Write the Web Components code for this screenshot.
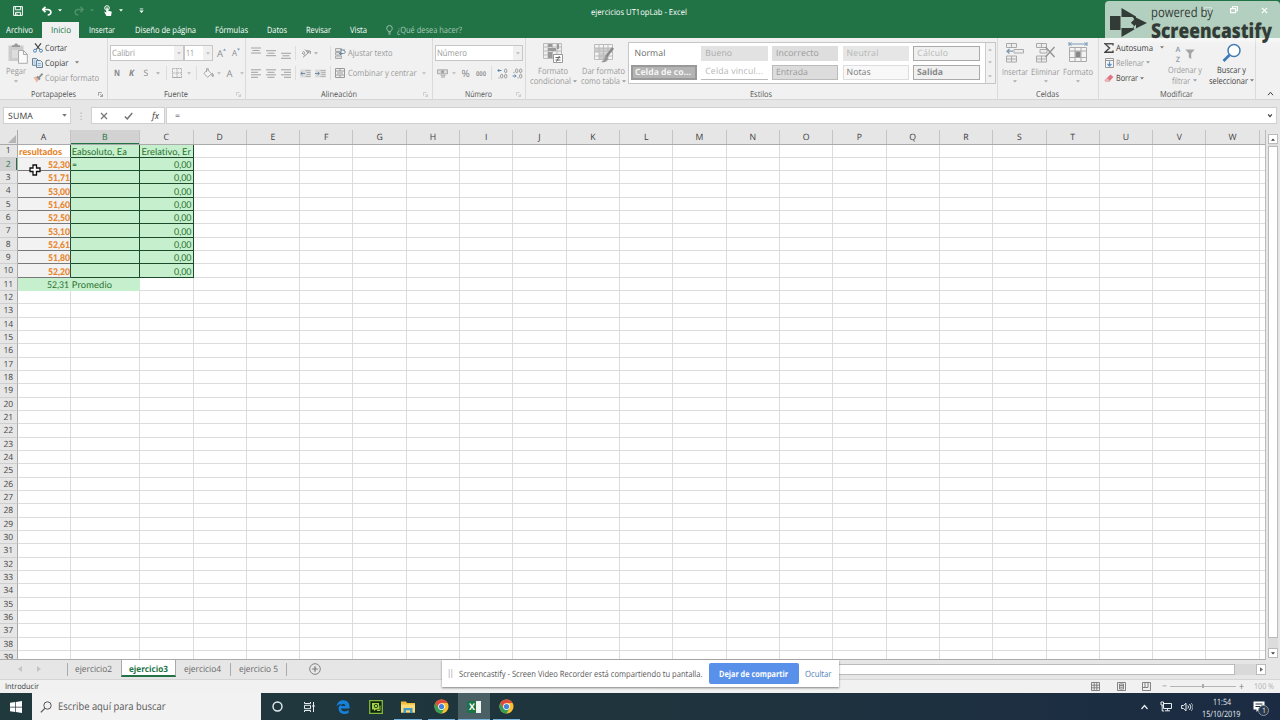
<!DOCTYPE html>
<html lang="es"><head><meta charset="utf-8"><title>ejercicios UT1opLab - Excel</title>
<style>html,body{margin:0;width:1280px;height:720px;overflow:hidden;background:#e6e6e6;font-family:"Open Sans","Noto Sans",sans-serif;font-size:8.7px;color:#3c3c3c;text-rendering:geometricPrecision}</style></head>
<body><excel-app></excel-app>
<script>
/* Single line of text fitted to a given width */
customElements.define('x-text', class extends HTMLElement {
  connectedCallback() {
    if (this.shadowRoot) return;
    const a = n => this.getAttribute(n);
    const w = parseFloat(a('w'));
    this.attachShadow({mode:'open'}).innerHTML = `<style>:host{display:block;flex:none;white-space:nowrap;line-height:1.36;${w?`width:${w}px;`:''}margin-left:${a('ml')||0}px;${a('s')?`font-size:${a('s')}px;`:''}${a('c')?`color:${a('c')};`:''}${a('b')?`font-weight:${a('b')};`:''}}span{display:inline-block;vertical-align:top;transform-origin:0 50%}</style><span><slot></slot></span>`;
    const s = this.shadowRoot.querySelector('span'), n = this.textContent.length;
    if (!w) return;
    const nat = s.getBoundingClientRect().width;
    if (nat <= w) s.style.letterSpacing = ((w - nat) / n).toFixed(3) + 'px';
    s.style.transform = `translateY(.7px) scaleX(${Math.min(1, w / nat).toFixed(4)})`;
  }
});
const chrome = `<circle cx="8" cy="8" r="7.5" fill="#fbc02d"/><path d="M8 8 1.5 4.3A7.5 7.5 0 0 1 14.5 4.3H8z" fill="#df4a3c"/><path d="M1.5 4.3A7.5 7.5 0 0 0 8 15.5L11.2 9.8 8 8 4.8 9.8z" fill="#35a055"/><path d="M1.5 4.3 4.9 10 8 8V4.3z" fill="#df4a3c"/><circle cx="8" cy="8" r="3.6" fill="#fff"/><circle cx="8" cy="8" r="2.8" fill="#4285d8"/>`;
const lines = (y, ws) => ws.map((w,i)=>`<path d="M${w[0]} ${y+i*2.5}h${w[1]}" stroke="currentColor" stroke-width=".9"/>`).join('');
const ICONS = {
  save:['0 0 10 10','<path d="M.6.6h8.8v8.8H.6zM2.3.6v3.2h5.4V.6M2.6 9.4V6.3h4.8v3.1M4 7.5v1.9"/>'],
  undo:['0 0 10 10','<path d="M3.5.8.8 3.5l2.7 2.6M1 3.5h4.5C10 3.5 10 9 5.7 9" stroke-width="1.7"/>'],
  redo:['0 0 10 10','<path d="M6.5.8 9.2 3.5 6.5 6.1M9 3.5H4.5C0 3.5 0 9 4.3 9" stroke-width="1.5"/>'],
  touch:['0 0 10 12','<circle cx="4" cy="3" r="2.3"/><path d="M3.3 2.5v5L1 6.5 3.5 11H8l.8-4.2-4-1.2V2.5z" fill="currentColor" stroke="none"/>'],
  car:['0 0 6 4','<path d="M0 0h6L3 3.6z" fill="currentColor" stroke="none"/>'],
  qat:['0 0 6 6','<path d="M1 .5h4"/><path d="M.4 2.5h5.2L3 5.4z" fill="currentColor" stroke="none"/>'],
  bulb:['0 0 8 11','<path d="M2.7 7.4C2.7 5.9.8 5.4.8 3.6a3.2 3.2 0 0 1 6.4 0c0 1.8-1.9 2.3-1.9 3.8zM2.7 8.8h2.6M3 10.2h2"/>'],
  paste:['0 0 20 21','<path d="M.5 2.5h15V18H.5z" fill="#ccc" stroke="none"/><path d="M4 4V2.2h2.2C6.2-.2 10-.2 10 2.2h2V4z" fill="#999" stroke="none"/><path d="M4 7h7v8H4z" fill="#ddd" stroke="none"/><path d="M10.5 7.5h5l3.8 3.8v9h-8.8zM15.5 7.5v4h3.8" fill="#fafafa" stroke="#aaa"/>'],
  cut:['0 0 10 10','<path d="M2 .3 6.8 6.5M8 .3 3.2 6.5" stroke="#454545" stroke-width="1.2"/><circle cx="2" cy="7.7" r="1.5" stroke="#5286b8"/><circle cx="8" cy="7.7" r="1.5" stroke="#5286b8"/>'],
  copy:['0 0 11 11','<path d="M.5 1.5h4l1.8 1.8v5H.5z" fill="#dce6f0" stroke="#6e8297"/><path d="M4.5 3.5h4l2 2v5h-6z" fill="#dce9f5" stroke="#6e8297"/><path d="M5.8 6.5h3M5.8 8.4h3M1.8 4h1.5M1.8 6h1.5" stroke="#6c9cc7" stroke-width=".7"/>'],
  brush:['0 0 10 10','<path d="M.3 4.3 3.8 9.5 6.5 6 4 3.5z" fill="#e6b9a4" stroke="none"/><path d="m4 3.5 3 3M6 4.5 9.5.6" stroke="#8e8e8e" stroke-width="1.8"/>'],
  launch:['0 0 6 6','<path d="M.5 4.5v-4h4M2.5 2.5l2.7 2.7M5.4 2.5v3h-3" stroke-width=".8"/>'],
  up:['0 0 4 3','<path d="M0 3h4L2 0z" fill="#7d9dbb" stroke="none"/>'], dn:['0 0 4 3','<path d="M0 0h4L2 3z" fill="#7d9dbb" stroke="none"/>'],
  border:['0 0 10 10','<path d="M.5.5h9v9h-9zM5 .5v9M.5 5h9" stroke-dasharray="1.2 .6"/><path d="M.5 9.5h9"/>'],
  fill:['0 0 11 10','<path d="m4.5 1.8 4 4-4 3.5-3.6-4zM3.5 4V.6h1.8V3" fill="#f4f4f4"/><path d="M9.2 5c1.8 2.2 1.6 3.5.6 3.5S8.5 7.300 9.2 5" fill="currentColor"/>'],
  at:['0 0 10 8',lines(1,[[0,10],[1.5,7],[0,10]])], am:['0 0 10 8',lines(1.7,[[0,10],[1.5,7],[0,10]])], ab:['0 0 10 8',lines(2.3,[[0,10],[1.5,7],[0,10]])],
  al:['0 0 10 9',lines(.8,[[0,10],[0,7],[0,10],[0,7]])], ac:['0 0 10 9',lines(.8,[[0,10],[1.5,7],[0,10],[1.5,7]])], ar:['0 0 10 9',lines(.8,[[0,10],[3,7],[0,10],[3,7]])],
  orient:['0 0 10 10','<path d="m2 9.300 7-6M9.300 6V3H6.500"/><path d="m1 5 3 2.500M1.500 4.500C2.500 2 4.500 5 3 6M4 1.500l3 3.500M5 3c2-1.500 3 .5 1.800 1.800"/>'],
  ind:['0 0 11 9','<path d="M0 .5h11v8H0z" fill="#ddd" stroke="none"/><path d="M5.500 1.500h5M6.500 3.500h4M6.500 5.500h4M5.500 7.500h5" stroke="#aaa" stroke-width=".8"/><path d="M5 4.500H1M2.500 2.800.8 4.500l1.700 1.700" stroke="#6c8ba8"/>'],
  ind2:['0 0 11 9','<path d="M0 .5h11v8H0z" fill="#ddd" stroke="none"/><path d="M5.500 1.500h5M6.500 3.500h4M6.500 5.500h4M5.500 7.500h5" stroke="#aaa" stroke-width=".8"/><path d="M0 4.500h4M2.700 2.800l1.700 1.700-1.700 1.700" stroke="#6c8ba8"/>'],
  wrap:['0 0 11 11','<path d="M.5.5h6v3h-6zM.5 4.500h6v2.500h-6zM.5 8h6v2.500h-6z" fill="#e2e2e2" stroke="#aaa"/><path d="M5 2h5M4 5.500h4.500c2.500 0 2-3 0-3M6 4.200 4.500 5.500 6 7" stroke="#6889a5"/>'],
  merge:['0 0 10 10','<path d="M.5.5h9v9h-9zM.5 3h9M.5 7h9M5 .5V3M5 7v2.500"/><path d="M2 5h6"/>'],
  money:['0 0 11 9','<path d="M.5.8h10v4H.5z" fill="#ddd"/><circle cx="5.500" cy="2.800" r="1.300" fill="#999"/><path d="M3.500 6.200h5M4 8h4" stroke-width="1.400" stroke="#bbb"/>'],
  cond:['0 0 20 21','<path d="M.5.5h18v15H.5z" fill="#eee" stroke="#bbb"/><path d="M5 .5v15M9.500.5v15M14 .5v15M.5 4h18M.5 8h18M.5 12h18" stroke="#bbb"/><path d="M5 1h4v3H5zM5 5h8v3H5zM5 9h4v6H5zM14 1h2v5h-2z" fill="#9a9a9a" stroke="none"/><path d="M10.500 11.500h9v8h-9z" fill="#fff" stroke="#999"/><path d="M12.500 14.500h5M12.500 17h5M16.500 13l-3 5.500" stroke="#666"/>'],
  tbl:['0 0 20 21','<path d="M.5 1.500h18v15H.5z" fill="#f5f5f5" stroke="#bbb"/><path d="M.5 5h18v4H.5zM5 10h9v6H5z" fill="#ccc" stroke="none"/><path d="M5 1.500v15M9.500 1.500v15M14 1.500v15M.5 5h18M.5 9h18M.5 13h18" stroke="#bbb"/><path d="M19 5 12 14" stroke="#888" stroke-width="2.500"/><path d="M12 13c-2 1-1 4-5 6 3 1 7 0 7-4z" fill="#999" stroke="none"/>'],
  ins:['0 0 18 20','<path d="M.5.5h10v4H.5zM5.500.5v4M.5 13h10v6H.5zM.5 16h10M5.500 13v6M8 6.500h9.500v3.500H8z" fill="#eee" stroke="#aaa"/><path d="M7 8.200H1M3.500 6 1 8.200l2.500 2.300" stroke="#7c97b0" stroke-width="1.300"/>'],
  del:['0 0 20 20','<path d="M.5.5h10v4H.5zM5.500.5v4M.5 13h10v6H.5zM.5 16h10M5.500 13v6M4 6.500h7v3.500H4z" fill="#eee" stroke="#aaa"/><path d="m9.500 4 9 10M18.500 4l-9 10" stroke="#949494" stroke-width="1.400"/>'],
  fmt:['0 0 20 21','<path d="M1 0v4M19 0v4M1 2h18M3.500.5 1.500 2l2 1.500M16.500.5l2 1.500-2 1.500" stroke="#7a9ab8"/><path d="M1.500 5.500h17v14h-17zM7 5.500v14M13 5.500v14M1.500 9h17M1.500 15.500h17" fill="#f4f4f4" stroke="#aaa"/><path d="M7.500 9.500h5v5.500h-5z" fill="#888" stroke="none"/>'],
  sum:['0 0 10 10','<path d="M9 2.500V.8H1L5.500 5 1 9.200h8V7.500" stroke="#444" stroke-width="1.400"/>'],
  rell:['0 0 9 10','<path d="M.5.5h8v9h-8zM.5 2.500h8" fill="#f5f5f5" stroke="#999"/><path d="M4.500 3.500V8M2.500 6l2 2.200 2-2.200" stroke="#5b8fc4" stroke-width="1.200"/>'],
  erase:['0 0 10 9','<path d="M6.500.5 9.300 3 5 8H2L.5 6.200z" fill="#de7484" stroke="none"/><path d="m2.800 3.800 3 3L5 8H2L.5 6.200z" fill="#eab5bc" stroke="none"/>'],
  sort:['0 0 10 11','<path d="M.3.5h9.400L6.200 4.500V10L3.800 8.500v-4z" fill="#a5a5a5" stroke="none"/>'],
  find:['0 0 19 19','<circle cx="12" cy="7" r="6" fill="#fff" stroke="#3e79b4" stroke-width="1.500"/><path d="M7.500 11.500 1.500 17.500" stroke="#3e79b4" stroke-width="2.600"/>'],
  caretup:['0 0 8 6','<path d="m1 5 3-3.500L7 5" stroke-width="1.200"/>'], caretdn:['0 0 8 6','<path d="m1.500 1.500 2.500 3 2.500-3" stroke-width="1.600"/>'],
  x:['0 0 8 8','<path d="m1 1 6 6M7 1 1 7" stroke-width="1.300"/>'], ok:['0 0 9 8','<path d="m.8 4.500 2.500 2.300L8.300 1" stroke-width="1.500"/>'],
  restore:['0 0 8 8','<path d="M.6 2.600h5v4h-5zM2.500 2.500V.7h5v4H5.700" stroke-width="1.100"/>'],
  min:['0 0 9 8','<path d="M.5.500h8v6h-8z"/>'],
  plus:['0 0 12 12','<circle cx="6" cy="6" r="5.300" stroke-width=".9"/><path d="M6 3.200v5.600M3.200 6h5.600" stroke-width="1.200"/>'],
  left:['0 0 4 6','<path d="M4 0v6L0 3z" fill="currentColor" stroke="none"/>'], right:['0 0 4 6','<path d="M0 0v6l4-3z" fill="currentColor" stroke="none"/>'],
  v1:['0 0 9 9','<path d="M.5.5h8v8h-8zM3.200.5v8M5.800.5v8M.5 3.200h8M.5 5.800h8" stroke-width=".9"/>'], v2:['0 0 9 9','<path d="M.5.5h8v8h-8zM2.500 2v5h4V2zM3 3.500h3M3 5.200h3" stroke-width=".9"/>'], v3:['0 0 9 9','<path d="M.5.5h8v8h-8zM.5 5.500h5.500v-5M3 .5v5" stroke-width=".9"/>'],
  win:['0 0 12 12','<path d="M0 1.700 5.300 1v4.700H0zM6 .9 12 0v5.700H6zM0 6.400h5.300V11L0 10.300zM6 6.400h6V12l-6-.9z" fill="#fff" stroke="none"/>'],
  search:['0 0 12 12','<circle cx="7.500" cy="4.500" r="3.700"/><path d="M4.800 7.300.8 11.300" stroke-width="1.200"/>'],
  ring:['0 0 11 11','<circle cx="5.500" cy="5.500" r="4.500" stroke-width="1.400"/>'],
  task:['0 0 11 10','<path d="M.5 0v1.500h6V0M.5 3.300h6v3.400h-6zM.5 10V8.500h6V10M9.500 0v10"/><path d="M8.500 3h2v2h-2z" fill="currentColor" stroke="none"/>'],
  edge:['0 0 14 14','<path d="M.6 6.500C1.200 2 4 .3 7.300.3c4 0 6.200 3 6.200 6.200v2H5c.3 3.500 5 3.500 7.700 1.800v2.800c-5 2.300-10.200.5-10.200-4.500 0-2 1-3.500 2.800-4.200C3.500 4.200 2 4.600.6 6.500zM5 6h4.500C9.500 3.500 5.500 3 5 6z" fill="#1681db" stroke="none" fill-rule="evenodd"/>'],
  cam:['0 0 14 14','<path d="M.7.7h12.600v12.600H.7z" fill="#10240e" stroke="#82b93d" stroke-width="1.300"/><path d="M3 3h7v6.500H7L5 11V9.500H3z" fill="#a5cf45" stroke="none"/><circle cx="7" cy="6" r="1.700" stroke="#25491e"/><path d="M8 10.500h3V5.500" stroke="#a5cf45"/>'],
  folder:['0 0 14 12','<path d="M0 .5h5l1 1.500h8v9.500H0z" fill="#eebd3c" stroke="none"/><path d="M0 3.500h14v8H0z" fill="#fbdc76" stroke="none"/><path d="M2.500 12V7h9v5H9V9.300H5V12z" fill="#419bc8" stroke="none"/>'],
  chrome:['0 0 16 16','<g stroke="none">'+chrome+'</g>'],
  net:['0 0 12 11','<path d="M3.500 2.500h8v5h-8zM7.500 7.500v2M5 9.800h5M1 1v3h2.500V1zM2.200 4v6h2"/>'],
  vol:['0 0 12 10','<path d="M.6 3.500h2L5 1.200v7.600L2.600 6.500h-2zM6.800 3.500q1.500 1.500 0 3M8.500 2q3 3 0 6"/><path d="M10.200 1q3.500 4 0 8" opacity=".6"/>'],
  note:['0 0 12 12','<path d="M.5.5h11v8H6L3.500 11V8.500h-3z" fill="#fff" stroke="none"/><path d="M2.500 3h7M2.500 5.500h7" stroke="#1c2e42"/>'],
  cross:['0 0 12 12','<path d="M4 1h3.500v3H11v3.500H7.500V11H4V7.500H1V4h3z" fill="#fff" stroke="#111" stroke-width="1.300"/>'],
  cast:['0 0 37 29','<path d="M0 8h10.500v14H0zM11.500 0l14.500 8.500v4l-3.500-3.500h-11zM11.500 29l14.500-8.500v-4l-3.500 3.500h-11zM23.800 8.500 37 15 23.800 21.500v-4l-3-2.800 3-2.700z" fill="#333b37" stroke="none"/>'],
  dec1:['0 0 11 11','<path d="M4.500 2.500H1M2.300 1 .8 2.500 2.300 4" stroke="#5f86aa"/><ellipse cx="8.700" cy="2.800" rx="1.200" ry="1.900"/><ellipse cx="4.700" cy="8.200" rx="1.200" ry="1.900"/><ellipse cx="8.700" cy="8.200" rx="1.200" ry="1.900"/><path d="M2 9.300v1.200"/>'],
  dec2:['0 0 11 11','<ellipse cx="4.700" cy="2.800" rx="1.200" ry="1.900"/><ellipse cx="8.700" cy="2.800" rx="1.200" ry="1.900"/><path d="M2 3.900v1.200M6 9.300v1.200"/><ellipse cx="8.700" cy="8.200" rx="1.200" ry="1.900"/><path d="M.5 8H4M2.700 6.500 4.200 8 2.700 9.500" stroke="#5f86aa"/>'],
  corner:['0 0 8 8','<path d="M8 0v8H0z" fill="#b5b5b5" stroke="none"/>'],
  grip:['0 0 5 9','<path d="M1.200 0v9M3.800 0v9" stroke="#c4c4c4"/>']
};
customElements.define('x-icon', class extends HTMLElement {
  connectedCallback() {
    if (this.shadowRoot) return;
    const a = n => this.getAttribute(n), [vb, body] = ICONS[a('n')], v = vb.split(' ');
    this.attachShadow({mode:'open'}).innerHTML = `<style>:host{display:block;flex:none;width:${a('w')||v[2]}px;height:${a('h')||v[3]}px;margin-left:${a('ml')||0}px;${a('c')?`color:${a('c')}`:''}}svg{display:block;width:100%;height:100%}</style><svg viewBox="${vb}" fill="none" stroke="currentColor">${body}</svg>`;
  }
});
const define = (name, css, html) => customElements.define(name, class extends HTMLElement {
  constructor() {
    super();
    const t = document.createElement('template');
    t.innerHTML = `<style>:host{display:block;box-sizing:border-box;flex:none}*{box-sizing:border-box}.r{display:flex;align-items:center;flex:none}.c{display:flex;flex-direction:column;flex:none;align-items:center}${css}</style>${html}`;
    this.attachShadow({mode:'open'}).append(t.content.cloneNode(true));
  }
});
const T = (s,w,ml=0,x='') => `<x-text w="${w}" ml="${ml}" ${x}>${s}</x-text>`;
const I = (n,ml=0,x='') => `<x-icon n="${n}" ml="${ml}" ${x}></x-icon>`;
const car = (ml,c='#777') => I('car',ml,`w="4" h="3" c="${c}"`);

define('title-bar', ':host{height:21px;display:flex;align-items:center;color:#fff;background:#217346}',
  I('save',13)+I('undo',19)+I('car',6,'w="4" h="3"')+I('redo',12,'c="#4d9069"')+I('car',6,'w="4" h="3" c="#4d9069"')+I('touch',9)+I('car',6,'w="4" h="3"')+I('qat',16,'w="5" h="6"')+`<div class="r" style="margin:2px 0 0 auto;width:689px">`+T('ejercicios UT1opLab - Excel',96,0,'s="8.300"')+'</div>');
define('tab-strip', ':host{height:17px;display:flex;align-items:center;color:#fff;background:#217346;padding-top:1px}.on{background:#f1f1f1;color:#217346;width:37px;height:17px;margin-left:9px}',
  T('Archivo',27,6)+`<div class="r on">${T('Inicio',20,8.500)}</div>`+T('Insertar',26,10)+T('Diseño de página',61,20)+T('Fórmulas',33,19)+T('Datos',20,19)+T('Revisar',25,19)+T('Vista',17,19)+I('bulb',19,'w="7" h="10" c="#a9cab7"')+T('¿Qué desea hacer?',65,4,'c="#a9cab7"'));
define('ribbon-group', ':host{height:61px;display:flex;flex-direction:column;border-right:1px solid #dadada;position:relative}.b{height:50.500px;flex:none}.l{display:flex;align-items:center;height:11px;justify-content:center;font-size:8.300px;color:#555}.k{position:absolute;right:4px;bottom:2px}',
  '<div class="b"><slot></slot></div><div class="l"><slot name="label"></slot></div><div class="k"><slot name="launch"></slot></div>');
const group = (w,label,lw,body,l) => `<ribbon-group style="width:${w}px">${body}<x-text slot="label" w="${lw}">${label}</x-text>${l?`<x-icon slot="launch" n="launch" w="5" h="5" c="${l}"></x-icon>`:''}</ribbon-group>`;
const sty = (s,w,c,bg,x='') => `<div class="st" style="color:${c};background:${bg};${x}">${T(s,w,/border:/.test(x)?(/2px/.test(x)?2:3):4)}</div>`;
const big = (ic,w,a,aw,b,bw,c) => `<div class="c" style="width:${w}px;color:${c}">${I(ic)}<div style="height:${b===null?2:0}px"></div>${T(a,aw,0,'style="margin-top:.5px"')}${b===null?`<div style="height:3px"></div>${car(0,'#aaa')}`:`<div class="r" style="height:10px">${T(b,bw)}${car(2,c)}</div>`}</div>`;
define('ribbon-bar', `:host{height:62px;display:flex;background:#f1f1f1;border-bottom:1px solid #d5d5d5}.g{color:#aaa}.box{background:#fff;border:1px solid #c6c6c6;height:16px;color:#999}.arr{width:9px;height:14px;background:#f0f0f0;margin-left:auto;display:flex;align-items:center;justify-content:center}.v{width:1px;height:14px;background:#ddd;flex:none}
.gal{width:368px;height:42px;border:1px solid #c6c6c6;background:#fff;display:flex;margin-top:4px}.sg{display:grid;grid-template-columns:repeat(5,66.500px);column-gap:4.200px;grid-template-rows:15px 15px;row-gap:3.500px;padding:3px 0 0 2px;width:351px;flex:none}.st{display:flex;align-items:center;overflow:hidden;height:15px}.st x-text{margin-top:-1px}.gb{width:10px;margin-left:5px;background:#f1f1f1;border-left:1px solid #ccc;display:flex;flex-direction:column;justify-content:space-around;align-items:center}`,
group(107.500,'Portapapeles',45,
 `<div class="r" style="align-items:flex-start"><div class="c" style="width:32px;padding-top:5px"><div style="padding-left:4px">${I('paste')}</div><div style="height:1px"></div>${T('Pegar',20,0,'c="#999"')}<div style="height:3px"></div>${car(0,'#aaa')}</div>
 <div style="padding-top:2px"><div class="r" style="height:15.300px">${I('cut',1)}${T('Cortar',22,2)}</div><div class="r" style="height:15.300px">${I('copy')}${T('Copiar',23.500,2)}${car(6)}</div><div class="r" style="height:15.300px">${I('brush',1)}${T('Copiar formato',54,2)}</div></div></div>`.replace('54" ml="2"','54" ml="2" c="#999"'),'#777')+
group(138,'Fuente',24,
 `<div class="r" style="padding-top:7px;margin-left:2.500px"><div class="box r" style="width:74px">${T('Calibri',23,1)}<div class="arr">${car(0,'#bbb')}</div></div><div class="box r" style="width:29px">${T('11',8,1)}<div class="arr">${car(0,'#bbb')}</div></div>${T('A',6,4,'s="9.500" c="#888"')}<div style="margin-top:-7px">${I('up',0,'w="3" h="3"')}</div>${T('A',5,5.500,'s="8.500" c="#888"')}<div style="margin-top:-7px">${I('dn',0,'w="3" h="3"')}</div></div>
 <div class="r g" style="margin-top:5px;height:14px">${T('N',6,6,'b="700" c="#888"')}${T('K',5,9,'b="700" c="#888" style="font-style:italic"')}${T('S',5,10,'c="#888" style="text-decoration:underline"')}${car(7,'#aaa')}<i class="v" style="margin-left:6px"></i>${I('border',5)}${car(5,'#bbb')}<i class="v" style="margin-left:5px"></i>${I('fill',6)}${car(3,'#bbb')}${T('A',7,6,'s="9.500" c="#888"')}${car(6,'#bbb')}</div>`,'#bbb')+
group(187.500,'Alineación',36,
 `<div class="r" style="padding-top:7px;height:23px;color:#999">${I('at',5,'style="margin-top:-5px"')}${I('am',5)}${I('ab',5,'style="margin-top:3px"')}<i class="v" style="margin-left:4px"></i>${I('orient',5)}${car(3,'#aaa')}<i class="v" style="margin-left:12px"></i>${I('wrap',4)}${T('Ajustar texto',44.500,2)}</div>
 <div class="r" style="margin-top:5px;height:14px;color:#999">${I('al',5)}${I('ac',5)}${I('ar',5)}<i class="v" style="margin-left:4px"></i>${I('ind',4)}${I('ind2',4)}<i class="v" style="margin-left:4px"></i>${I('merge',4.500)}${T('Combinar y centrar',68.500,3)}${car(5,'#bbb')}</div>`,'#bbb')+
group(92.500,'Número',27,
 `<div class="r" style="padding-top:7px;margin-left:2px"><div class="box r" style="width:88px">${T('Número',30,1)}<div class="arr">${car(0,'#bbb')}</div></div></div><div class="r g" style="margin-top:5px;height:14px">${I('money',4)}${car(4,'#bbb')}${T('%',9,5.500,'s="10" c="#888"')}${T('000',10,5,'s="6.500" b="700" c="#999"')}<i class="v" style="margin-left:5px"></i>${I('dec1',5,'c="#999"')}${I('dec2',4,'c="#999"')}</div>`,'#bbb')+
group(472.500,'Estilos',22,
 `<div class="r" style="align-items:flex-start"><div class="r" style="padding-top:5px;width:102px;align-items:flex-start">${big('cond',55,'Formato',30,'condicional',41,'#999')}${big('tbl',46,'Dar formato',43,'como tabla',39,'#999')}</div><div class="gal"><div class="sg">${
 sty('Normal',31,'#666','#fff')+sty('Bueno',27,'#aaa','#e2e2e2')+sty('Incorrecto',43,'#999','#dedede')+sty('Neutral',32,'#b5b5b5','#e6e6e6')+sty('Cálculo',31,'#b5b5b5','#f0f0f0','border:1px solid #aaa')+
 sty('Celda de co...',56,'#f4f4f4','#b4b4b4','border:2px double #999;font-weight:700')+sty('Celda vincul...',58,'#b5b5b5','#fff','border-bottom:1px solid #bbb')+sty('Entrada',32,'#999','#dcdcdc','border:1px solid #bbb')+sty('Notas',24,'#777','#f8f8f8','border:1px solid #ddd')+sty('Salida',26,'#888','#f0f0f0','border:1px solid #aaa;font-weight:700')}</div><div class="gb">${I('car',0,'w="4" h="3" c="#bbb" style="transform:rotate(180deg)"')}${car(0,'#bbb')}${car(0,'#bbb')}</div></div></div>`)+
group(100.500,'Celdas',23,`<div class="r" style="padding:5px 0 0 2px;align-items:flex-start">${big('ins',29,'Insertar',26,null,0,'#999')}${big('del',33,'Eliminar',28.500,null,0,'#999')}<div style="margin-top:-1px">${big('fmt',32,'Formato',30,null,0,'#999')}</div></div>`)+
group(157,'Modificar',33,`<div class="r" style="align-items:flex-start"><div style="padding:2px 0 0 5px;width:63px"><div class="r" style="height:15.300px">${I('sum')}${T('Autosuma',37,2)}${car(7)}</div><div class="r" style="height:15.300px;color:#999">${I('rell',1)}${T('Rellenar',28,2)}${car(2,'#999')}</div><div class="r" style="height:15.300px">${I('erase',.500)}${T('Borrar',22,2)}${car(2)}</div></div>
 <div class="c" style="width:46px;padding-top:6px;color:#999"><div class="r" style="height:20px"><div class="c" style="width:8px;color:#8b9db0">${T('A',6,0,'s="7.300" b="600" style="line-height:10px"')}${T('Z',5.500,0,'s="7.300" b="600" style="line-height:10px"')}</div>${I('sort',2)}</div>${T('Ordenar y',34)}<div class="r" style="height:10px">${T('filtrar',18)}${car(3,'#999')}</div></div><div class="c" style="width:47px;padding-top:5px">${I('find',0,'w="19" h="20"')}<div style="height:1px"></div>${T('Buscar y',29)}<div class="r" style="height:10px">${T('seleccionar',39)}${car(2)}</div></div></div>`)+
`<div style="margin:53px 0 0 11px">${I('caretup',0,'w="7" h="5"')}</div>`);
define('formula-bar', ':host{height:30px;display:flex;align-items:flex-start;padding:7px 0 0 3px;background:#e6e6e6}.f{height:17px;background:#fff;border:1px solid #d0d0d0}',
 `<div class="f r" style="width:68px">${T('SUMA',25,4)}${I('car',29,'w="5" h="3" c="#777"')}</div><div class="r" style="height:17px">${T('⋮',4,8,'s="9"')}</div><div class="f r" style="width:74px;margin-left:8px">${I('x',8,'c="#777"')}${I('ok',16,'c="#777"')}${T('fx',7,19,'s="9.500" style="font-style:italic;margin-left:19px"')}</div><div class="f r" style="width:1111px;margin-left:1px">${T('=',5,8)}${I('caretdn',1087,'w="6" h="5"')}</div>`);

/* Spreadsheet grid */
const cols = [...'ABCDEFGHIJKLMNOPQRSTUVW'], cw = c => c=='A'?53:c=='B'?69.700:53.320;
const vals = ['52,30','51,71','53,00','51,60','52,50','53,10','52,61','51,80','52,20'];
const cell = (r,c) => {
  if (r==1) return c=='A'?['h',T('resultados',43,1)]:c=='B'?['g',T('Eabsoluto, Ea',55,1.300)]:c=='C'?['g',T('Erelativo, Er',49.500,1.300)]:['',''];
  if (r<11) return c=='A'?['o',T(vals[r-2],22)]:c=='B'?['g'+(r==2?' act':''),r==2?T('=',5,1.300):'']:c=='C'?['g n',T('0,00',17.500)]:['',''];
  if (r==11) return c=='A'?['p n',T('52,31',22)]:c=='B'?['p',T('Promedio',40.500,1.300)]:['',''];
  return ['',''];
};
let grid = `<div class="row hd"><div class="rh">${I('corner',0)}</div>${cols.map(c=>`<div class="ch ${c=='B'?'sel':''}" style="width:${cw(c)}px">${c}</div>`).join('')}</div>`;
for (let r=1;r<40;r++) grid += `<div class="row"><div class="rh ${r==2?'sel':''}">${r}</div>${cols.map(c=>{const [k,t]=cell(r,c);return `<div class="d ${k}" style="width:${cw(c)}px">${t}</div>`}).join('')}<div class="d e"></div></div>`;
define('sheet-grid', `:host{height:530px;display:flex;background:#e6e6e6}.s{width:1266px;height:530px;overflow:hidden;border-right:1px solid #bbb;border-bottom:1px solid #aaa;flex:none}
.row{display:flex;height:13.335px;background:#fff}.hd{height:14.500px;background:#e6e6e6;border-bottom:1px solid #aaa}.rh{width:17.500px;flex:none;background:#e6e6e6;border-right:1px solid #aaa;border-bottom:1px solid #cfcfcf;display:flex;align-items:center;justify-content:center;font-size:8.500px;color:#444;line-height:12px;padding-top:1.500px}.hd .rh{justify-content:flex-end;align-items:flex-end;padding:0 1px 1px 0;border-bottom:0}.ch{flex:none;text-align:center;font-size:8.700px;line-height:15.500px;border-right:1px solid #c4c4c4}.sel{background:#d2d2d2;color:#217346;box-shadow:inset 0 -1px #217346}.rh.sel{box-shadow:inset -1px 0 #217346}
.d{flex:none;border-right:1px solid #dcdcdc;border-bottom:1px solid #dcdcdc;display:flex;align-items:center;font-family:Lato,"Open Sans",sans-serif;font-size:9.300px;color:#28722d}.d x-text{line-height:12px}.e{width:10px;border-right:0}.h{color:#e8862d;font-weight:700}.o{background:#f2f2f2;color:#e8862d;font-weight:700;justify-content:flex-end;border-bottom-color:#777;border-right-color:#1d5131}.h{border-right-color:#1d5131;font-weight:900}.o{font-weight:900}.g{background:#c6efce;border-color:#1c4b2c}.n{justify-content:flex-end;padding-right:1px}.p{background:#c6efce;border-color:#c6efce}.act{border-bottom:1px solid #154f2d}
.sb{margin:4px 0 0 2px;width:10px;height:524px;display:flex;flex-direction:column;background:#dcdcdc}.bt{height:10px;background:#fff;border:1px solid #bbb;display:flex;align-items:center;justify-content:center}.th{height:492px;background:#fff;border:1px solid #bbb;margin-top:2px}`,
 `<div class="s">${grid}</div><div class="sb"><div class="bt"><x-icon n="car" w="4" h="3" style="transform:rotate(180deg)"></x-icon></div><div class="th"></div><div class="bt" style="margin-top:auto">${I('car',0,'w="4" h="3"')}</div></div>`);
define('sheet-tabs', ':host{height:18.500px;display:flex;background:#e6e6e6;color:#666}.v{width:1px;height:13px;background:#aaa;margin:3px 0 0}.t{height:18px}.on{width:55px;height:17px;background:#fff;border:1px solid #aaa;border-top:0;border-bottom:2px solid #217346;color:#217346;padding-top:2px}.h{margin:4px 0 0 auto;width:448px;height:11px;display:flex;background:#d9d9d9}.th{width:417px;border:1px solid #bbb;background:#fff}.b{width:10px;background:#fff;border:1px solid #bbb;margin-left:auto;margin-right:0;display:flex;align-items:center;justify-content:center}',
 `<div class="r t" style="width:67px;color:#c4c4c4">${I('left',18)}${I('right',15)}</div><i class="v"></i><div class="r t">${T('ejercicio2',37,7)}</div><div class="r on" style="margin-left:9px">${T('ejercicio3',39,6.500,'b="700"')}</div><div class="r t">${T('ejercicio4',37,8)}</div><i class="v" style="margin-left:9px"></i><div class="r t">${T('ejercicio 5',39,8)}</div><i class="v" style="margin-left:8px"></i><div class="r t">${I('plus',21.500,'c="#777"')}</div><div class="h"><div class="th"></div><div class="b">${I('right',0,'w="3" h="5"')}</div></div><div style="width:14px"></div>`);
define('status-bar', ':host{height:14.500px;display:flex;align-items:center;background:#f1f1f1;border-top:1px solid #d5d5d5}.ln{width:66px;height:1px;background:#b5b5b5;margin-left:3px;display:flex;justify-content:center;align-items:center}.ln i{width:2px;height:4px;background:#aaa}',
 T('Introducir',34,4.500,'s="8"')+`<div class="r" style="margin-left:auto;width:189px;color:#777">${I('v1')}${I('v2',17)}${I('v3',16)}${T('−',5,11)}<div class="ln"><i></i></div>${T('+',5,3,'s="10"')}${T('100 %',20,10,'s="8" c="#b0b0b0"')}</div>`);
define('task-bar', ':host{height:27px;display:flex;align-items:stretch;background:linear-gradient(90deg,#20393d,#1f343d 50%,#1b2b43);color:#e8edf0}.a{width:32px;display:flex;align-items:center;justify-content:center}.q{width:229px;background:#f2f2f2;color:#555}.u{border-bottom:1px solid #76b4e0;padding-top:1px;width:27px;margin:0 3px}.xl{width:32px;background:#4b6064;margin:0}.x{width:14px;height:12px;background:linear-gradient(90deg,#1d7343 65%,#eef5f0 65%);display:flex;align-items:center}.badge{width:11px;height:11px;border-radius:50%;background:#29394a;border:1px solid #8795a0;margin:8px 0 0 -7px;display:flex;align-items:center;justify-content:center}',
 `<div class="a">${I('win')}</div><div class="q r">${I('search',8)}${T('Escribe aquí para buscar',107.500,6,'s="10.400"')}</div><div class="a">${I('ring')}</div><div class="a">${I('task')}</div><div class="a" style="width:36px">${I('edge')}</div><div class="a" style="width:29px">${I('cam')}</div><div class="a u" style="width:28px;margin-left:4px">${I('folder')}</div><div class="a u">${I('chrome',0,'w="15" h="15"')}</div><div class="a u xl"><div class="x">${T('X',6,1.500,'s="9" b="700" c="#fff"')}</div></div><div class="a u">${I('chrome',0,'w="15" h="15"')}</div>
 <div class="r" style="margin-left:auto;width:140px">${I('caretup',0,'w="9" h="6"')}${I('net',11)}${I('vol',9)}<div class="c" style="margin-left:9px;width:39px">${T('11:54',18,0,'style="line-height:12px"')}${T('15/10/2019',38.500,0,'style="line-height:12px"')}</div>${I('note',12)}<div class="badge">${T('1',4,0,'s="7.500" style="margin-top:-1px"')}</div></div>`);
define('share-bar', ':host{position:absolute;left:442px;top:660px;width:397px;height:27px;background:#fff;display:flex;align-items:center;box-shadow:0 1px 2px #0007;color:#555}.b{width:90px;height:21px;margin-left:6px;border-radius:2px;background:#5990ea;color:#fff;display:flex;align-items:center;justify-content:center}',
 I('grip',6)+T('Screencastify - Screen Video Recorder está compartiendo tu pantalla.',243.500,6)+`<div class="b">${T('Dejar de compartir',69,0,'b="700"')}</div>`+T('Ocultar',26.500,6.500,'c="#4b7cb6"'));
define('cast-mark', ':host{position:absolute;left:1105px;top:1px;width:175px;height:45px;border-radius:4px 4px 0 0;background:linear-gradient(#ffffffa8 37px,#ffffff8c 37px,#ffffff10 43px);color:#333b37;display:flex}.w{position:absolute;top:5px;left:99px;display:flex;color:#fff;align-items:center}.c1{position:relative}',
 `<div class="w">${I('min',0,'w="8" h="7" style="opacity:.5"')}${I('restore',18)}${I('x',23,'w="7" h="7"')}</div><div style="padding:7px 0 0 5px">${I('cast')}</div><div class="c1" style="padding:2px 0 0 4px">${T('powered by',62,0,'s="13.500" style="line-height:17px"')}${T('Screencastify',121,0,'s="20.500" b="800" style="line-height:20px"')}</div>`);
define('pointer-cross', ':host{position:absolute;left:29px;top:164px}', I('cross'));
define('excel-app', ':host{width:1280px;height:720px;overflow:hidden;display:flex;flex-direction:column;position:relative}', '<title-bar></title-bar><tab-strip></tab-strip><ribbon-bar></ribbon-bar><formula-bar></formula-bar><sheet-grid></sheet-grid><sheet-tabs></sheet-tabs><status-bar></status-bar><task-bar></task-bar><share-bar></share-bar><cast-mark></cast-mark><pointer-cross></pointer-cross>');
</script></body></html>
